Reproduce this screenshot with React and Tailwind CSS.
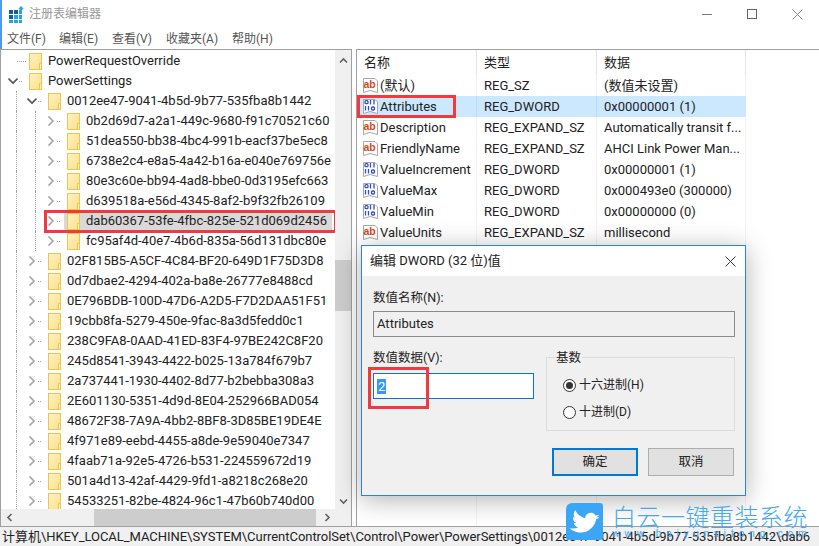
import React from 'react';
import { FaTwitter } from 'react-icons/fa';

const Folder = () => (
  <svg width="13" height="17" viewBox="0 0 13 17" className="shrink-0">
    <defs>
      <linearGradient id="folderFill" x1="0" y1="0" x2="1" y2="1">
        <stop offset="0" stopColor="#fff3c4" />
        <stop offset="1" stopColor="#fbdf8a" />
      </linearGradient>
    </defs>
    <rect x="0.5" y="0.5" width="12" height="16" fill="url(#folderFill)" stroke="#ecc653" />
    <path d="M10.5 16.5V10.5H12.5V16.5Z" fill="#fff3c4" stroke="#ecc653" />
  </svg>
);

const Chevron = ({ open }) => (
  <svg width="10" height="10" viewBox="0 0 10 10" className="shrink-0">
    <path
      d={open ? 'M0.5 2.5L5 7l4.5-4.5' : 'M2.5 0.5L7 5 2.5 9.5'}
      fill="none"
      stroke={open ? '#555555' : '#a6a6a6'}
      strokeWidth="1.6"
    />
  </svg>
);

const Arrow = ({ d }) => (
  <svg width="9" height="9" viewBox="0 0 9 9" className="shrink-0">
    <path d={d} fill="none" stroke="#606060" strokeWidth="1.6" />
  </svg>
);

const ValueIcon = ({ kind }) => (
  <svg width="17" height="17" viewBox="0 0 17 17" className="shrink-0">
    <path d="M1.5 1.5H13L15.5 4V15.5L8 13.5L1.5 15.5Z" fill="#ffffff" stroke="#a8a8a8" />
    {kind === 'ab' ? (
      <text x="1.5" y="10.5" fontSize="10.5" fontWeight="700" fill="#d9471c" fontFamily="Liberation Sans, sans-serif">ab</text>
    ) : (
      <g fill="none" stroke="#2f4fd0" strokeWidth="1.3">
        <rect x="3" y="2.7" width="3" height="3" rx="1" />
        <path d="M8.5 2v4.5M12 2v4.5" />
        <path d="M3.5 8v4.5M6.5 8v4.5" />
        <rect x="9.5" y="9" width="3" height="3" rx="1" />
      </g>
    )}
  </svg>
);

const Row = ({ depth, guides = [], chevron, label, selected, redBox }) => (
  <div className="relative flex h-5 shrink-0 items-center pl-[6px]">
    {Array.from({ length: depth }).map((_, i) => (
      <div key={i} className="flex h-full w-[19px] shrink-0 justify-center">
        {guides.includes(i) && <div className="h-full border-l border-dotted border-[#a0a0a0]" />}
      </div>
    ))}
    <div className="relative flex h-full w-[19px] shrink-0 items-center justify-end">
      {chevron ? (
        <div className="mr-[4px] flex items-center gap-[1px]">
          <Chevron open={chevron === 'open'} />
          <div className="w-[3px] border-t border-dotted border-[#a0a0a0]" />
        </div>
      ) : (
        <div className="w-[9px] border-t border-dotted border-[#a0a0a0]" />
      )}
    </div>
    <div className={`flex h-full items-center pl-[3px] ${selected ? 'w-[268px] bg-[#d9d9d9]' : ''}`}>
      <Folder />
      <span className="ml-[6px] whitespace-nowrap">{label}</span>
    </div>
    {redBox && <div className="absolute left-[43px] top-[-1px] h-[23px] w-[293px] border-[3px] border-[#ef3a3e]" />}
  </div>
);

const subKeys = [
  '0b2d69d7-a2a1-449c-9680-f91c70521c60',
  '51dea550-bb38-4bc4-991b-eacf37be5ec8',
  '6738e2c4-e8a5-4a42-b16a-e040e769756e',
  '80e3c60e-bb94-4ad8-bbe0-0d3195efc663',
  'd639518a-e56d-4345-8af2-b9f32fb26109',
  'dab60367-53fe-4fbc-825e-521d069d2456',
  'fc95af4d-40e7-4b6d-835a-56d131dbc80e',
];

const powerKeys = [
  '02F815B5-A5CF-4C84-BF20-649D1F75D3D8',
  '0d7dbae2-4294-402a-ba8e-26777e8488cd',
  '0E796BDB-100D-47D6-A2D5-F7D2DAA51F51',
  '19cbb8fa-5279-450e-9fac-8a3d5fedd0c1',
  '238C9FA8-0AAD-41ED-83F4-97BE242C8F20',
  '245d8541-3943-4422-b025-13a784f679b7',
  '2a737441-1930-4402-8d77-b2bebba308a3',
  '2E601130-5351-4d9d-8E04-252966BAD054',
  '48672F38-7A9A-4bb2-8BF8-3D85BE19DE4E',
  '4f971e89-eebd-4455-a8de-9e59040e7347',
  '4faab71a-92e5-4726-b531-224559672d19',
  '501a4d13-42af-4429-9fd1-a8218c268e20',
  '54533251-82be-4824-96c1-47b60b740d00',
];

const values = [
  { icon: 'ab', name: '(默认)', type: 'REG_SZ', data: '(数值未设置)' },
  { icon: 'bin', name: 'Attributes', type: 'REG_DWORD', data: '0x00000001 (1)', active: true },
  { icon: 'ab', name: 'Description', type: 'REG_EXPAND_SZ', data: 'Automatically transit f...' },
  { icon: 'ab', name: 'FriendlyName', type: 'REG_EXPAND_SZ', data: 'AHCI Link Power Man...' },
  { icon: 'bin', name: 'ValueIncrement', type: 'REG_DWORD', data: '0x00000001 (1)' },
  { icon: 'bin', name: 'ValueMax', type: 'REG_DWORD', data: '0x000493e0 (300000)' },
  { icon: 'bin', name: 'ValueMin', type: 'REG_DWORD', data: '0x00000000 (0)' },
  { icon: 'ab', name: 'ValueUnits', type: 'REG_EXPAND_SZ', data: 'millisecond' },
];

const Radio = ({ checked, label }) => (
  <div className="flex h-[14px] items-center gap-[3px] text-[12px]">
    <div className="flex h-[13px] w-[13px] items-center justify-center rounded-full border border-[#333333] bg-white">
      {checked && <div className="h-[7px] w-[7px] rounded-full bg-[#333333]" />}
    </div>
    <span>{label}</span>
  </div>
);

const EditDialog = () => (
  <div className="absolute left-[361px] top-[245px] flex h-[251px] w-[385px] flex-col border border-[#2b86d0] bg-[#f0f0f0] text-[12.5px] shadow-[0_4px_24px_rgba(0,0,0,0.3)]">
    <div className="flex h-[30px] shrink-0 items-center justify-between bg-white pl-[8px] pr-[9px]">
      <span className="text-[13px] text-[#222222]">编辑 DWORD (32 位)值</span>
      <svg width="11" height="11" viewBox="0 0 11 11">
        <path d="M0.5 0.5l10 10M10.5 0.5l-10 10" stroke="#333333" strokeWidth="1" />
      </svg>
    </div>
    <div className="flex flex-1 flex-col pl-[11px] pr-[10px] pt-[13px]">
      <div className="h-[17px] leading-[17px]">数值名称(N):</div>
      <div className="mt-[5px] flex h-[26px] items-center border border-[#8a8a8a] pl-[3px] text-[13px]">Attributes</div>
      <div className="mt-[12px] flex">
        <div className="w-[173px] shrink-0">
          <div className="h-[17px] leading-[17px]">数值数据(V):</div>
          <div className="mt-[7px] flex h-[26px] w-[161px] items-center border border-[#0078d7] bg-white pl-[3px]">
            <span className="bg-[#3399ff] px-px text-[13px] leading-[15px] text-white">2</span>
          </div>
        </div>
        <div className="relative mt-[8px] h-[74px] flex-1 border border-[#dcdcdc]">
          <span className="absolute left-[8px] top-[-9px] bg-[#f0f0f0] px-px leading-[17px]">基数</span>
          <div className="flex flex-col gap-[13px] pl-[16px] pt-[20px]">
            <Radio checked label="十六进制(H)" />
            <Radio label="十进制(D)" />
          </div>
        </div>
      </div>
      <div className="mt-[17px] flex justify-end gap-[10px] pr-px">
        <button className="h-[28px] w-[86px] border-2 border-[#0078d7] bg-[#e1e1e1]">确定</button>
        <button className="h-[28px] w-[86px] border border-[#adadad] bg-[#e1e1e1]">取消</button>
      </div>
    </div>
  </div>
);

const Watermark = () => (
  <div className="absolute left-[566px] top-[503px] flex gap-[9px]">
    <div className="flex h-[37px] w-[37px] items-center justify-center rounded-[3px] rounded-tl-[6px] bg-[#3ba6f5]">
      <FaTwitter className="mt-[2px] rotate-12 text-white" size={27} />
    </div>
    <div className="flex w-[196px] flex-col text-[#45a9f2]">
      <div className="whitespace-nowrap text-[24px] leading-[26px] tracking-[0.5px] font-['Noto_Sans_CJK_SC',sans-serif] font-light">白云一键重装系统</div>
      <div className="whitespace-nowrap text-[10px] leading-[10px] tracking-[4.8px]">www.baiyunxitong.com</div>
    </div>
  </div>
);

export default function App() {
  return (
    <div className="relative flex h-[546px] w-[819px] flex-col overflow-hidden bg-white text-[13px] text-[#222222] font-['Roboto','Noto_Sans_CJK_SC',sans-serif]">
      <div className="flex h-[28px] shrink-0 items-center border-l-2 border-[#4f9be8] pl-[7px]">
        <svg width="15" height="17" viewBox="0 0 15 17" className="mt-px">
          <path d="M0 4h4v4H0zM5 4h4v4H5zM0 9h4v4H0z" fill="#0f5f9e" />
          <path d="M10 4h3v4h-3zM5 9h4v4H5zM10 9h3v4h-3zM0 14h4v3H0zM5 14h4v3H5zM10 14h3v3h-3z" fill="#25a4e4" />
          <path d="M12 0l2.5 2.5L12 5 9.5 2.5z" fill="#3aa0e0" />
        </svg>
        <span className="ml-[5px] text-[12px] text-[#999999]">注册表编辑器</span>
        <div className="ml-auto flex items-center">
          <div className="w-[10px] border-t border-[#777777]" />
          <div className="ml-[35px] h-[10px] w-[10px] border border-[#666666]" />
          <svg width="11" height="11" viewBox="0 0 11 11" className="ml-[35px] mr-[16px]">
            <path d="M0.5 0.5l10 10M10.5 0.5l-10 10" stroke="#888888" strokeWidth="1" />
          </svg>
        </div>
      </div>
      <div className="flex h-[21px] shrink-0 items-center border-l-2 border-[#4f9be8] pl-[5px] text-[12px] text-[#555555]">
        <span className="w-[52px]">文件(F)</span>
        <span className="w-[53px]">编辑(E)</span>
        <span className="w-[54px]">查看(V)</span>
        <span className="w-[66px]">收藏夹(A)</span>
        <span>帮助(H)</span>
      </div>

      <div className="flex min-h-0 flex-1">
        <div className="flex w-[352px] shrink-0 flex-col border-r border-t border-l border-[#a0a0a0]">
          <div className="flex min-h-0 flex-1">
            <div className="flex min-w-0 flex-1 flex-col overflow-hidden pt-px">
              <Row depth={0} label="PowerRequestOverride" />
              <Row depth={0} chevron="open" label="PowerSettings" />
              <Row depth={1} guides={[0]} chevron="open" label="0012ee47-9041-4b5d-9b77-535fba8b1442" />
              {subKeys.map((k) => (
                <Row
                  key={k}
                  depth={2}
                  guides={[0, 1]}
                  chevron="closed"
                  label={k}
                  selected={k.startsWith('dab')}
                  redBox={k.startsWith('dab')}
                />
              ))}
              {powerKeys.map((k) => (
                <Row key={k} depth={1} guides={[0]} chevron="closed" label={k} />
              ))}
            </div>
            <div className="flex w-[16px] shrink-0 flex-col items-center bg-[#f0f0f0]">
              <div className="flex h-[20px] shrink-0 items-center justify-center">
                <Arrow d="M1 6.5l3.5-3.5 3.5 3.5" />
              </div>
              <div className="mt-[190px] h-[51px] w-full bg-[#cdcdcd]" />
              <div className="mt-auto flex h-[16px] shrink-0 items-center justify-center">
                <Arrow d="M1 2.5l3.5 3.5 3.5-3.5" />
              </div>
            </div>
          </div>
          <div className="flex h-[17px] shrink-0 items-center bg-[#f0f0f0]">
            <div className="flex w-[17px] justify-center">
              <Arrow d="M6.5 1L3 4.5 6.5 8" />
            </div>
            <div className="ml-[76px] h-full w-[222px] bg-[#cdcdcd]" />
            <div className="ml-[3px] flex w-[17px] justify-center">
              <Arrow d="M2.5 1L6 4.5 2.5 8" />
            </div>
          </div>
        </div>

        <div className="ml-[4px] flex min-w-0 flex-1 flex-col border-t border-l border-[#a0a0a0]">
          <div className="flex h-[25px] shrink-0">
            <div className="flex w-[120px] items-center border-r border-[#e5e5e5] pl-[7px]">名称</div>
            <div className="flex w-[120px] items-center border-r border-[#e5e5e5] pl-[7px]">类型</div>
            <div className="flex w-[149px] items-center border-r border-[#e5e5e5] pl-[7px]">数据</div>
          </div>
          {values.map((v) => (
            <div key={v.name} className={`relative flex h-[21px] shrink-0 ${v.active ? 'w-[389px] bg-[#cce8ff]' : ''}`}>
              <div className={`flex w-[120px] items-center gap-[1px] pl-[5px] ${v.active ? 'border-r border-[#b8dcf8]' : 'border-r border-[#f2f2f2]'}`}>
                <ValueIcon kind={v.icon} />
                <span className="whitespace-nowrap">{v.name}</span>
              </div>
              <div className={`flex w-[120px] items-center pl-[7px] ${v.active ? 'border-r border-[#b8dcf8]' : 'border-r border-[#f2f2f2]'}`}>{v.type}</div>
              <div className={`flex w-[149px] items-center whitespace-nowrap pl-[7px] ${v.active ? '' : 'border-r border-[#f2f2f2]'}`}>{v.data}</div>
              {v.active && <div className="absolute left-0 top-[-1px] h-[23px] w-[99px] border-[3px] border-[#ef3a3e]" />}
            </div>
          ))}
          <div className="flex flex-1">
            <div className="w-[120px] border-r border-[#f2f2f2]" />
            <div className="w-[120px] border-r border-[#f2f2f2]" />
            <div className="w-[149px] border-r border-[#f2f2f2]" />
          </div>
        </div>
      </div>

      <div className="flex h-[20px] shrink-0 items-center overflow-hidden whitespace-nowrap border-t border-[#a0a0a0] bg-[#f0f0f0] pl-[2px] tracking-[-0.04px]">
        计算机\HKEY_LOCAL_MACHINE\SYSTEM\CurrentControlSet\Control\Power\PowerSettings\0012ee47-9041-4b5d-9b77-535fba8b1442\dab6
      </div>

      <EditDialog />
      <div className="absolute left-[368px] top-[367px] h-[42px] w-[61px] border-[3px] border-[#ef3a3e]" />
      <Watermark />
    </div>
  );
}
